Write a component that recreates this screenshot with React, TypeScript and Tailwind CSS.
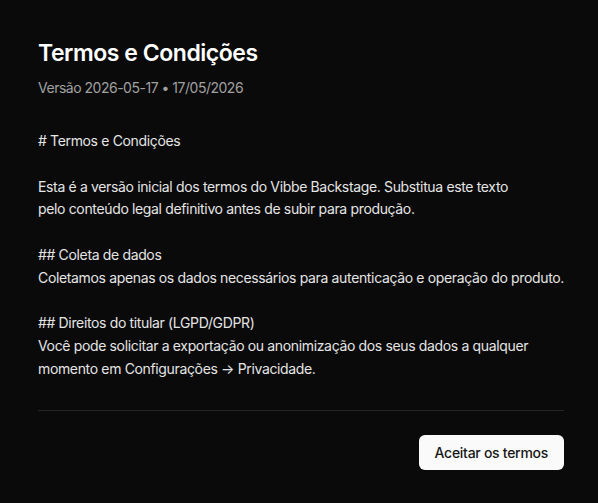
import React from "react";

const body = `# Termos e Condições

Esta é a versão inicial dos termos do Vibbe Backstage. Substitua este texto
pelo conteúdo legal definitivo antes de subir para produção.

## Coleta de dados
Coletamos apenas os dados necessários para autenticação e operação do produto.

## Direitos do titular (LGPD/GDPR)
Você pode solicitar a exportação ou anonimização dos seus dados a qualquer momento em Configurações → Privacidade.`;

export default function App() {
  return (
    <div
      className="w-[598px] h-[503px] bg-[#0a0a0a] text-[#e5e5e5] pl-[38px] pr-[34px] pt-[39px] flex flex-col"
      style={{ fontFamily: "Inter, 'Noto Sans', sans-serif" }}
    >
      <h1 className="text-[23px] leading-[28px] font-semibold text-white tracking-[-0.02em]">
        Termos e Condições
      </h1>
      <p className="mt-[11px] text-[14px] leading-[20px] text-[#a1a1a1] tracking-[-0.035em]">
        Versão 2026-05-17 • 17/05/2026
      </p>
      <div className="mt-[32px] text-[14px] leading-[22.8px] whitespace-pre-wrap text-[#e5e5e5] tracking-[-0.025em]">
        {body}
      </div>
      <div className="mt-[29px] h-px bg-[#262626]" />
      <div className="mt-[24px] flex justify-end">
        <button className="h-[35px] px-[16px] rounded-[6px] bg-[#fafafa] text-[#171717] text-[14px] font-medium tracking-[-0.02em]">
          Aceitar os termos
        </button>
      </div>
    </div>
  );
}
